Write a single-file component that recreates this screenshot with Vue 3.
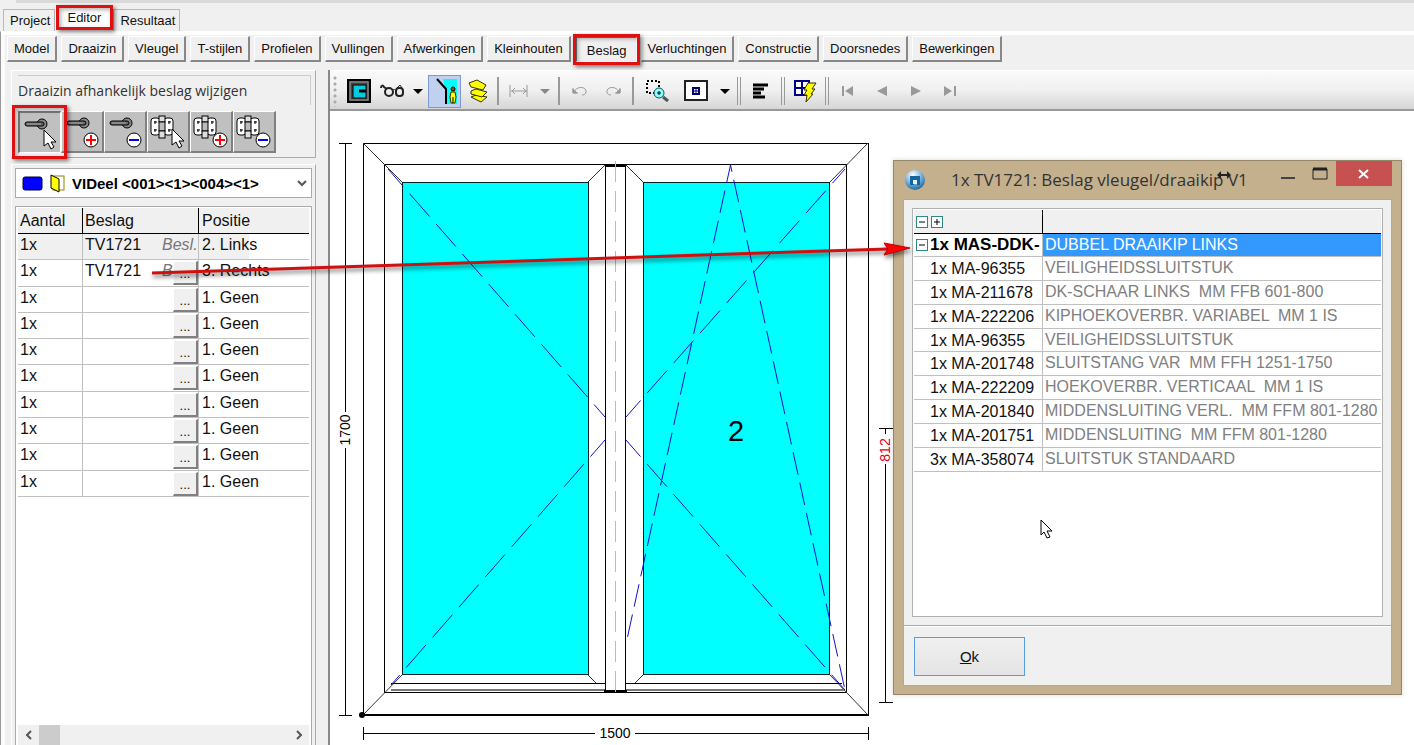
<template>
  <div class="app">
    <div class="top-strip"></div>
    <nav class="tabs">
      <button
        v-for="tab in tabs"
        :key="tab"
        type="button"
        class="tab"
        :class="{ active: tab === activeTab, marked: tab === activeTab }"
        @click="activeTab = tab"
      >{{ tab }}</button>
    </nav>

    <div class="page">
      <nav class="steps">
        <button
          v-for="step in steps"
          :key="step"
          type="button"
          class="step"
          :class="{ pressed: step === activeStep, marked: step === activeStep }"
          @click="activeStep = step"
        >{{ step }}</button>
      </nav>

      <div class="workspace">
        <aside class="sidebar">
          <section class="panel tools-panel">
            <h2 class="panel-title">Draaizin afhankelijk beslag wijzigen</h2>
            <div class="tools">
              <button
                v-for="(tool, i) in tools"
                :key="tool.label"
                type="button"
                class="tool"
                :class="{ pressed: i === activeTool, marked: i === activeTool }"
                :aria-label="tool.label"
                @click="activeTool = i"
              >
                <svg viewBox="0 0 42 42" width="42" height="42">
                  <g v-if="tool.kind === 'handle'" stroke="#000">
                    <ellipse cx="23" cy="12" rx="5" ry="5" fill="#888" />
                    <rect x="6" y="10" width="19" height="4" rx="2" fill="#666" />
                    <path d="M8 12h14" stroke="#aaa" />
                  </g>
                  <g v-else stroke="#000" fill="#fff">
                    <rect x="4" y="7" width="9" height="17" rx="3" />
                    <rect x="17" y="7" width="9" height="17" rx="3" />
                    <rect x="12" y="5" width="6" height="6" fill="#ddd" />
                    <rect x="12" y="11" width="6" height="9" fill="#bbb" />
                    <rect x="12" y="20" width="6" height="7" fill="#ddd" />
                    <path d="M8 10v3M8 18v3M22 10v3M22 18v3M7 11h3M7 19h3M21 11h3M21 19h3" />
                  </g>
                  <path
                    v-if="tool.badge === 'cursor'"
                    d="M25 18v16l4-3 3 6 3-2-3-5h5z"
                    fill="#fff"
                    stroke="#000"
                  />
                  <g v-else>
                    <circle cx="30" cy="29" r="7" fill="#fff" stroke="#000" />
                    <path v-if="tool.badge === 'plus'" d="M25 29h10M30 24v10" stroke="#f00" stroke-width="2" />
                    <path v-else d="M25 29h10" stroke="#00f" stroke-width="2" />
                  </g>
                </svg>
              </button>
            </div>
          </section>

          <section class="panel list-panel">
            <div class="combo">
              <svg class="combo-icons" viewBox="0 0 44 20" width="44" height="20">
                <rect x="1" y="4" width="19" height="13" rx="2" fill="#00f" stroke="#003" />
                <rect x="31" y="3" width="11" height="14" fill="#fff" stroke="#880" />
                <path d="M29 2l8 4v13l-8-4z" fill="#ff0" stroke="#000" />
              </svg>
              <select v-model="part" aria-label="Deel">
                <option>VIDeel &lt;001&gt;&lt;1&gt;&lt;004&gt;&lt;1&gt;</option>
              </select>
              <svg class="combo-arrow" viewBox="0 0 10 8" width="10" height="8">
                <path d="M1 2l4 4 4-4" fill="none" stroke="#555" stroke-width="2" />
              </svg>
            </div>

            <div class="list-box">
              <table class="fittings">
                <thead>
                  <tr>
                    <th class="col-count">Aantal</th>
                    <th class="col-fitting">Beslag</th>
                    <th>Positie</th>
                  </tr>
                </thead>
                <tbody>
                  <tr v-for="(row, i) in fittings" :key="i" :class="{ current: i === 0 }">
                    <td>1x</td>
                    <td>
                      <div class="fitting-cell">
                        <span class="code">{{ row.code }}</span>
                        <i>{{ row.note }}</i>
                        <button v-if="i > 0" type="button" class="more" aria-label="Beslag kiezen">...</button>
                      </div>
                    </td>
                    <td>{{ row.position }}</td>
                  </tr>
                </tbody>
              </table>
              <div class="scrollbar">
                <button type="button" aria-label="Naar links">
                  <svg viewBox="0 0 10 10" width="10" height="10"><path d="M7 1L3 5l4 4" /></svg>
                </button>
                <div class="thumb"></div>
                <button type="button" aria-label="Naar rechts">
                  <svg viewBox="0 0 10 10" width="10" height="10"><path d="M3 1l4 4-4 4" /></svg>
                </button>
              </div>
            </div>
          </section>
        </aside>

        <main class="editor">
          <div class="toolbar">
            <span class="grip"></span>
            <button type="button" class="tb" aria-label="Aanzicht">
              <svg viewBox="0 0 24 24" width="24" height="24">
                <rect x="1" y="1" width="22" height="22" fill="#444" stroke="#000" stroke-width="2" />
                <rect x="3" y="3" width="18" height="18" fill="none" stroke="#999" />
                <rect x="6" y="6" width="13" height="13" fill="#0cd" stroke="#000" />
                <path d="M12 12h7" stroke="#000" stroke-width="3" />
              </svg>
            </button>
            <button type="button" class="tb" aria-label="Weergave">
              <svg viewBox="0 0 26 16" width="26" height="16" fill="none" stroke="#222">
                <path d="M2 5c0-3 2-3 3-1l3 2" stroke-width="2" />
                <path d="M13 8c1-2 3-2 4 0M18 5l3-3 2 3" />
                <circle cx="10" cy="9" r="4" stroke-width="2" />
                <rect x="17" y="5" width="7" height="8" rx="3" stroke-width="2" />
              </svg>
            </button>
            <button type="button" class="caret" aria-label="Meer weergaven"><span></span></button>
            <button type="button" class="tb selected" aria-label="Buitenaanzicht">
              <svg viewBox="0 0 32 30" width="32" height="30">
                <path d="M14 3h14v25H16V14z" fill="#0ff" />
                <path d="M8 3l9 10v15" fill="none" stroke="#000" stroke-width="2" />
                <circle cx="24" cy="13" r="2" fill="#850" stroke="#000" />
                <path d="M22 16h4l1 5-1 6h-4l-1-6z" fill="#ff0" stroke="#330" />
                <path d="M24 21v6" stroke="#000" />
              </svg>
            </button>
            <button type="button" class="tb" aria-label="Lagen">
              <svg viewBox="0 0 22 24" width="22" height="24" fill="#ff0" stroke="#330">
                <path d="M4 18l5-2 11 2-6 5z" />
                <path d="M4 12l5-2 11 3-5 5-11-3z" />
                <path d="M2 4l8-3 9 5-3 5-12-3z" />
              </svg>
            </button>
            <span class="sep"></span>
            <button type="button" class="tb" aria-label="Maatlijn">
              <svg viewBox="0 0 20 12" width="20" height="12" fill="none" stroke="#999">
                <path d="M1 0v12M18 0v12M2 6h16M6 3L3 6l3 3M14 3l3 3-3 3" />
              </svg>
            </button>
            <button type="button" class="caret disabled" aria-label="Meer maatlijnen"><span></span></button>
            <span class="sep"></span>
            <button type="button" class="tb" aria-label="Ongedaan maken">
              <svg viewBox="0 0 18 12" width="18" height="12" fill="none" stroke="#999">
                <path d="M2 3v5h5M3 7c3-7 13-5 12 0 0 2-2 3-4 3" />
                <path d="M2 4v4h4z" fill="#999" />
              </svg>
            </button>
            <button type="button" class="tb" aria-label="Opnieuw">
              <svg viewBox="0 0 18 12" width="18" height="12" fill="none" stroke="#999">
                <path d="M16 3v5h-5M15 7C12 0 2 2 3 7c0 2 2 3 4 3" />
                <path d="M16 4v4h-4z" fill="#999" />
              </svg>
            </button>
            <span class="sep"></span>
            <button type="button" class="tb wide" aria-label="Zoom venster">
              <svg viewBox="0 0 24 24" width="24" height="24" fill="none">
                <path d="M2 2h12v12H2z" stroke="#000" stroke-width="2" stroke-dasharray="2 2" />
                <path d="M18 18l5 4" stroke="#555" stroke-width="3" />
                <circle cx="14" cy="14" r="5" fill="#8ff" stroke="#155" />
                <path d="M12 14h4M14 12v4" stroke="#000" />
              </svg>
            </button>
            <button type="button" class="tb wide" aria-label="Passend">
              <svg viewBox="0 0 24 22" width="24" height="22">
                <rect x="1" y="1" width="22" height="19" fill="#fff" stroke="#222" stroke-width="2" />
                <rect x="9" y="8" width="6" height="6" fill="#fff" stroke="#006" stroke-width="2" />
                <path d="M12 8v6M9 11h6" stroke="#006" />
              </svg>
            </button>
            <button type="button" class="caret" aria-label="Meer zoom"><span></span></button>
            <span class="sep double"></span>
            <button type="button" class="tb mid" aria-label="Uitlijnen">
              <svg viewBox="0 0 16 16" width="16" height="16" stroke="#000">
                <path d="M0 2h15M0 6h11M0 10h8M0 14h12" stroke-width="3" />
              </svg>
            </button>
            <span class="sep double"></span>
            <button type="button" class="tb mid" aria-label="Berekenen">
              <svg viewBox="0 0 24 24" width="24" height="24">
                <path d="M2 2h14v14H2zM9 2v14M2 9h14" fill="#fff" stroke="#008" stroke-width="2" />
                <path d="M15 4h8l-4 6h3l-4 5h2l-7 8 1-7h-3l3-5h-3z" fill="#ff0" stroke="#330" />
              </svg>
            </button>
            <span class="sep double"></span>
            <button
              v-for="nav in navButtons"
              :key="nav.label"
              type="button"
              class="tb nav"
              :aria-label="nav.label"
            >
              <svg viewBox="0 0 14 10" width="14" height="10"><path :d="nav.path" fill="#999" /></svg>
            </button>
          </div>

          <div class="canvas">
            <svg class="drawing" viewBox="330 111 1084 634">
              <!-- maatlijnen -->
              <g class="line">
                <path d="M345.5 143.5V412M345.5 448V715.5M339 143.5h13M339 715.5h13" />
                <path d="M363 733.5H595M635 733.5H868M363.5 727v13M868.5 727v13" />
                <path d="M879 428.5h14M885.5 428v6M885.5 464V702M879 702.5h14" />
              </g>
              <text class="dim" transform="translate(350 430) rotate(-90)">1700</text>
              <text class="dim" x="615" y="738">1500</text>
              <text class="dim red" transform="translate(890 450) rotate(-90)">812</text>

              <!-- kader -->
              <rect class="line" x="363.5" y="143.5" width="505" height="572" />
              <path class="line thick" d="M363 715H869" />
              <rect class="line" x="384.5" y="164.5" width="462" height="528" />
              <path class="thin" d="M363 143l39 39M868 143l-38 39M402 675l-39 40M830 675l38 40" />
              <path class="thin" d="M588 182l17-17M643 182l-17-17M588 675l8 8M643 675l-8 8" />
              <path class="line" d="M391 683.5H605M626 683.5H842M385 692.5H846" />
              <path class="bead" d="M391 690H605M626 690H844" />

              <!-- beglazing -->
              <rect class="glass" x="402.5" y="182.5" width="186" height="492" />
              <rect class="glass" x="643.5" y="182.5" width="186" height="492" />

              <!-- middenstijl -->
              <rect class="mullion" x="605.5" y="165.5" width="20" height="526" />
              <path class="line thick" d="M605 166H626M604 691H627" />
              <path class="axis" d="M615.5 161V693" />

              <!-- draairichting -->
              <g class="swing">
                <path d="M388 169L605 417" stroke-dashoffset="7" />
                <path d="M605 440L391 685" stroke-dashoffset="8" />
                <path d="M626 417L845 169" stroke-dashoffset="8" />
                <path d="M626 440L845 690" stroke-dashoffset="8" />
              </g>
              <g class="tilt">
                <path d="M730.5 165L626 644" stroke-dashoffset="5" />
                <path d="M730.5 165L845 690" stroke-dashoffset="16" />
              </g>
              <text class="field" x="736" y="441">2</text>
              <circle cx="362" cy="715" r="3" />
            </svg>
          </div>
        </main>
      </div>
    </div>

    <div class="dialog" role="dialog" aria-labelledby="dialog-title">
      <header class="title-bar">
        <svg class="logo" viewBox="0 0 20 20" width="20" height="20">
          <defs>
            <radialGradient id="ball" cx="40%" cy="25%" r="80%">
              <stop offset="0" stop-color="#fff" />
              <stop offset="0.5" stop-color="#7fb8e0" />
              <stop offset="1" stop-color="#1a5f96" />
            </radialGradient>
          </defs>
          <circle cx="10" cy="10" r="10" fill="url(#ball)" />
          <path d="M5 6h10v9h-3v-4H9v4H5z" fill="#17659f" />
          <path d="M8 10h4v4H8z" fill="#dff4ff" />
        </svg>
        <h1 id="dialog-title">1x TV1721: Beslag vleugel/draaikip V1</h1>
        <div class="window-buttons">
          <button type="button" aria-label="Minimaliseren">
            <svg viewBox="0 0 16 14" width="16" height="14"><path d="M1 11h14" stroke="#444" stroke-width="2" /></svg>
          </button>
          <button type="button" aria-label="Maximaliseren">
            <svg viewBox="0 0 16 14" width="16" height="14">
              <path d="M1 2h14v10H1z" fill="none" stroke="#222" />
              <path d="M1 2h14" stroke="#222" stroke-width="3" />
            </svg>
          </button>
          <button type="button" class="close" aria-label="Sluiten">
            <svg viewBox="0 0 12 10" width="12" height="10"><path d="M1 1l9 8M10 1L1 9" stroke="#fff" stroke-width="2" /></svg>
          </button>
        </div>
        <svg class="resize-cursor" viewBox="0 0 14 10" width="14" height="10">
          <path d="M0 5l4-4v3h6V1l4 4-4 4V6H4v3z" fill="#222" />
        </svg>
      </header>

      <div class="dialog-body">
        <div class="parts-box">
          <table class="parts">
            <thead>
              <tr>
                <th class="col-part">
                  <div class="tree-buttons">
                    <button type="button" class="tree" aria-label="Alles inklappen">
                      <svg viewBox="0 0 10 10" width="12" height="12"><path d="M2 5h6" /></svg>
                    </button>
                    <button type="button" class="tree" aria-label="Alles uitklappen">
                      <svg viewBox="0 0 10 10" width="12" height="12"><path d="M2 5h6M5 2v6" /></svg>
                    </button>
                  </div>
                </th>
                <th aria-label="Omschrijving"></th>
              </tr>
            </thead>
            <tbody>
              <tr class="group">
                <td>
                  <div class="group-cell">
                    <button type="button" class="tree" aria-label="Inklappen">
                      <svg viewBox="0 0 10 10" width="12" height="12"><path d="M2 5h6" /></svg>
                    </button>
                    <span>1x MAS-DDK-</span>
                  </div>
                </td>
                <td>DUBBEL DRAAIKIP LINKS</td>
              </tr>
              <tr v-for="(item, i) in parts" :key="i">
                <td>{{ item[0] }}</td>
                <td>{{ item[1] }}</td>
              </tr>
            </tbody>
          </table>
          <svg class="pointer" viewBox="0 0 14 20" width="14" height="20">
            <path d="M1 1v15l3-3 3 6 3-1-3-6h5z" fill="#fff" stroke="#000" />
          </svg>
        </div>
        <footer class="dialog-footer">
          <button type="button" class="ok"><u>O</u>k</button>
        </footer>
      </div>
    </div>

    <svg class="arrow" viewBox="0 0 770 50" width="770" height="50">
      <path d="M2 33L738 9" stroke="#d01010" stroke-width="3" />
      <path d="M734 3l26 5-26 7 4-6z" fill="#f00" stroke="#b00" />
    </svg>
  </div>
</template>

<script setup>
  import { ref } from 'vue'

  const tabs = ['Project', 'Editor', 'Resultaat']
  const activeTab = ref('Editor')

  const steps = [
    'Model',
    'Draaizin',
    'Vleugel',
    'T-stijlen',
    'Profielen',
    'Vullingen',
    'Afwerkingen',
    'Kleinhouten',
    'Beslag',
    'Verluchtingen',
    'Constructie',
    'Doorsnedes',
    'Bewerkingen',
  ]
  const activeStep = ref('Beslag')

  const tools = [
    { kind: 'handle', badge: 'cursor', label: 'Beslag kiezen' },
    { kind: 'handle', badge: 'plus', label: 'Beslag toevoegen' },
    { kind: 'handle', badge: 'minus', label: 'Beslag verwijderen' },
    { kind: 'hinge', badge: 'cursor', label: 'Scharnier kiezen' },
    { kind: 'hinge', badge: 'plus', label: 'Scharnier toevoegen' },
    { kind: 'hinge', badge: 'minus', label: 'Scharnier verwijderen' },
  ]
  const activeTool = ref(0)

  const part = ref('VIDeel <001><1><004><1>')

  // de eerste twee regels zijn ingevuld, de rest is nog leeg
  const fittings = [
    { code: 'TV1721', note: 'Besl.', position: '2. Links' },
    { code: 'TV1721', note: 'B', position: '3. Rechts' },
    ...Array.from({ length: 8 }, () => ({ code: '', note: '', position: '1. Geen' })),
  ]

  const navButtons = [
    { label: 'Eerste', path: 'M1 0h2v10H1zM12 0v10L4 5z' },
    { label: 'Vorige', path: 'M12 0v10L2 5z' },
    { label: 'Volgende', path: 'M2 0v10l10-5z' },
    { label: 'Laatste', path: 'M1 0v10l8-5zM11 0h2v10h-2z' },
  ]

  const parts = [
    ['1x MA-96355', 'VEILIGHEIDSSLUITSTUK'],
    ['1x MA-211678', 'DK-SCHAAR LINKS  MM FFB 601-800'],
    ['1x MA-222206', 'KIPHOEKOVERBR. VARIABEL  MM 1 IS'],
    ['1x MA-96355', 'VEILIGHEIDSSLUITSTUK'],
    ['1x MA-201748', 'SLUITSTANG VAR  MM FFH 1251-1750'],
    ['1x MA-222209', 'HOEKOVERBR. VERTICAAL  MM 1 IS'],
    ['1x MA-201840', 'MIDDENSLUITING VERL.  MM FFM 801-1280'],
    ['1x MA-201751', 'MIDDENSLUITING  MM FFM 801-1280'],
    ['3x MA-358074', 'SLUITSTUK STANDAARD'],
  ]
</script>

<style>
  body {
    margin: 0;
    background: #f0f0f0;
  }
</style>

<style scoped>
  * {
    box-sizing: border-box;
  }

  button {
    margin: 0;
    padding: 0;
    border: 0;
    background: none;
    color: inherit;
    font: inherit;
  }

  svg {
    display: block;
    flex: none;
  }

  .app {
    position: relative;
    display: flex;
    flex-direction: column;
    height: 100vh;
    overflow: hidden;
    background: #f0f0f0;
    color: #111;
    font-family: 'Liberation Sans', Arial, sans-serif;
    font-size: 13px;
  }

  .top-strip {
    height: 3px;
    margin-left: 16px;
    background: #d9d9d9;
  }

  .tabs {
    display: flex;
    align-items: flex-end;
    height: 28px;
    padding-left: 3px;
  }

  .tab {
    height: 22px;
    padding: 0 4px 0 6px;
    border: 1px solid #b8b8b8;
    border-bottom: 0;
  }

  .tab.active {
    position: relative;
    height: 25px;
    padding: 0 12px 2px;
    border: 0;
    background: #fff;
  }

  /* rode markering rond het actieve onderdeel */
  .marked::after {
    content: '';
    position: absolute;
    z-index: 2;
    inset: -4px;
    border: 3px solid #e01010;
    box-shadow: 2px 2px 4px rgba(0, 0, 0, 0.5), inset 2px 2px 4px rgba(0, 0, 0, 0.3);
    pointer-events: none;
  }

  .tab.marked::after {
    inset: -1px 0 1px 1px;
  }

  .page {
    flex: 1;
    display: flex;
    flex-direction: column;
    min-height: 0;
    border-top: 1px solid #fff;
    border-left: 1px solid #999;
    box-shadow: inset 4px 0 #fbfbfb;
  }

  .steps {
    display: flex;
    gap: 4px;
    height: 38px;
    padding: 4px 0 8px 6px;
    box-shadow: inset 0 3px #fff;
  }

  .step {
    position: relative;
    padding: 0 6px;
    border: solid;
    border-width: 1px 2px 2px 1px;
    border-color: #fff #888 #888 #fff;
    background: #f0f0f0;
    white-space: nowrap;
  }

  .step.pressed {
    padding: 1px 9px 0 10px;
    border-color: #777 #fff #fff #777;
    border-width: 2px 1px 1px 2px;
  }

  .workspace {
    flex: 1;
    display: flex;
    min-height: 0;
  }

  .sidebar {
    flex: none;
    display: flex;
    flex-direction: column;
    gap: 6px;
    width: 329px;
    padding: 0 12px 0 10px;
    border-right: 2px solid #888;
  }

  .panel {
    border: 1px solid #aaa;
    border-color: #fff #aaa #aaa #fff;
  }

  .tools-panel {
    height: 88px;
    padding: 4px 4px 0 6px;
  }

  .panel-title {
    height: 30px;
    margin: 0;
    border-top: 1px solid #ccc;
    border-right: 1px solid #ccc;
    font: 14px/30px 'Open Sans', 'Noto Sans', sans-serif;
    color: #333;
  }

  .tools {
    display: flex;
    padding-top: 6px;
  }

  .tool {
    position: relative;
    width: 43px;
    height: 42px;
    border: solid;
    border-width: 1px 2px 2px 1px;
    border-color: #fff #808080 #808080 #fff;
    background: #c0c0c0;
    overflow: visible;
  }

  .tool svg {
    margin: -1px;
  }

  .tool.pressed {
    border-width: 2px 1px 1px 2px;
    border-color: #777 #fff #fff #777;
  }

  .tool.marked::after {
    inset: -8px -7px -7px -8px;
  }

  .list-panel {
    flex: 1;
    display: flex;
    flex-direction: column;
    gap: 8px;
    min-height: 0;
    padding: 3px 3px 0;
    border-bottom: 0;
  }

  .combo {
    display: flex;
    align-items: center;
    height: 30px;
    padding: 0 4px 0 6px;
    border: 1px solid #aaa;
    background: #fff;
  }

  .combo select {
    flex: 1;
    min-width: 0;
    height: 26px;
    padding: 0 0 0 6px;
    border: 0;
    appearance: none;
    background: none;
    color: #000;
    font: bold 15px 'Liberation Sans', Arial, sans-serif;
  }

  .list-box {
    flex: 1;
    display: flex;
    flex-direction: column;
    min-height: 0;
    padding: 1px 2px 0;
    border: 1px solid #aaa;
    border-bottom: 0;
    background: #fff;
  }

  table {
    width: 100%;
    border-spacing: 0;
    table-layout: fixed;
    font-size: 16px;
    line-height: 20px;
  }

  th,
  td {
    padding: 0 0 0 2px;
    text-align: left;
    font-weight: normal;
    white-space: pre;
    overflow: hidden;
  }

  th {
    background: #f0f0f0;
    border-right: 1px solid #000;
    border-bottom: 1px solid #000;
  }

  td {
    border-right: 1px solid #c0c0c0;
    border-bottom: 1px solid #c0c0c0;
  }

  th:last-child,
  td:last-child {
    border-right: 0;
  }

  .fittings {
    height: 289px;
  }

  .fittings th {
    height: 26px;
  }

  .fittings td {
    height: 26px;
    padding-top: 1px;
    vertical-align: top;
  }

  .fittings td:last-child,
  .fittings th:last-child {
    padding-left: 3px;
  }

  .col-count {
    width: 65px;
  }

  .col-fitting {
    width: 116px;
  }

  .current td {
    background: #f0f0f0;
  }

  .current td:last-child {
    background: linear-gradient(to right, #f0f0f0 50px, #fff 50px);
  }

  .fitting-cell {
    display: flex;
    height: 24px;
  }

  .fitting-cell .code {
    flex: none;
    width: 77px;
  }

  .fitting-cell i {
    flex: 1;
    min-width: 0;
    overflow: hidden;
    color: #777;
  }

  .more {
    align-self: flex-end;
    width: 25px;
    height: 24px;
    padding-top: 3px;
    border: solid;
    border-width: 1px 2px 2px 1px;
    border-color: #fff #808080 #808080 #fff;
    background: #f0f0f0;
    font-size: 13px;
    line-height: 18px;
  }

  .scrollbar {
    display: flex;
    height: 20px;
    margin-top: auto;
    background: #f0f0f0;
  }

  .scrollbar button {
    display: grid;
    place-items: center;
    width: 21px;
  }

  .scrollbar button:last-child {
    margin-left: auto;
  }

  .scrollbar path {
    fill: none;
    stroke: #555;
    stroke-width: 2;
  }

  .thumb {
    width: 21px;
    background: #ccc;
  }

  .editor {
    flex: 1;
    display: flex;
    flex-direction: column;
    min-width: 0;
  }

  .toolbar {
    display: flex;
    align-items: center;
    height: 41px;
    padding-top: 2px;
    border-top: 1px solid #fff;
    border-bottom: 2px solid #999;
    background: linear-gradient(#fafafa, #f0f0f0 50%, #d6d6d6);
  }

  .grip {
    width: 12px;
    height: 32px;
    background: radial-gradient(circle at 5px 3px, #aaa 1px, transparent 2px) 0 0 / 12px 6px;
  }

  .tb {
    display: grid;
    place-items: center;
    flex: none;
    width: 33px;
    height: 33px;
  }

  .tb.wide {
    width: 39px;
  }

  .tb.mid {
    width: 36px;
  }

  .tb.nav {
    width: 34px;
  }

  .tb.selected {
    border: 1px solid #7b9bd0;
    background: #c0d0ee;
  }

  .caret {
    display: grid;
    place-items: center;
    flex: none;
    width: 20px;
    height: 33px;
  }

  .caret span {
    border: 5px solid transparent;
    border-top-color: #000;
    border-bottom: 0;
  }

  .caret.disabled span {
    border-top-color: #888;
  }

  .sep {
    width: 2px;
    height: 28px;
    margin: 0 3px;
    background: #999;
  }

  .sep.double {
    width: 4px;
    margin: 0 2px;
    border: solid #999;
    border-width: 0 1px;
    background: none;
  }

  .canvas {
    flex: 1;
    min-height: 0;
    overflow: hidden;
    background: #fff;
  }

  .drawing {
    width: 100%;
    font-family: 'Liberation Sans', Arial, sans-serif;
  }

  .line {
    fill: none;
    stroke: #000;
  }

  .thick {
    stroke-width: 2;
  }

  .thin {
    fill: none;
    stroke: #333;
  }

  .bead {
    stroke: #777;
    stroke-width: 2;
  }

  .glass {
    fill: #0ff;
    stroke: #022;
  }

  .mullion {
    fill: #fff;
    stroke: #000;
  }

  .axis {
    stroke: #bbb;
    stroke-dasharray: 21 9;
  }

  .swing {
    fill: none;
    stroke: #11c;
    stroke-dasharray: 30 10;
  }

  .tilt {
    fill: none;
    stroke: #11c;
    stroke-dasharray: 23 8;
  }

  .dim {
    font-size: 14px;
    text-anchor: middle;
  }

  .red {
    fill: #e00020;
  }

  .field {
    font-size: 29px;
    text-anchor: middle;
  }

  .dialog {
    position: absolute;
    top: 160px;
    left: 893px;
    display: flex;
    flex-direction: column;
    width: 509px;
    height: 535px;
    padding: 0 9px 8px;
    border: 1px solid #94866a;
    background: #c4b08d;
    box-shadow: 0 0 5px rgba(0, 0, 0, 0.15);
  }

  .title-bar {
    position: relative;
    display: flex;
    align-items: center;
    height: 38px;
  }

  .logo {
    margin-left: 2px;
  }

  .title-bar h1 {
    margin: 0 0 0 26px;
    font: 17px/38px 'Open Sans', 'Noto Sans', sans-serif;
    color: #333;
    white-space: nowrap;
  }

  .window-buttons {
    display: flex;
    align-self: flex-start;
    margin-left: auto;
  }

  .window-buttons button {
    display: grid;
    place-items: center;
    width: 32px;
    height: 25px;
  }

  .window-buttons .close {
    width: 56px;
    background: #c75050;
  }

  .resize-cursor {
    position: absolute;
    top: 9px;
    left: 314px;
  }

  .dialog-body {
    flex: 1;
    display: flex;
    flex-direction: column;
    min-height: 0;
    border: 1px solid #aaa;
    background: #f0f0f0;
  }

  .parts-box {
    position: relative;
    flex: 1;
    margin: 8px;
    padding: 1px;
    border: 1px solid #b0b0b0;
    background: #fff;
  }

  .parts {
    height: 262px;
  }

  .parts th {
    height: 24px;
  }

  .parts td {
    padding-top: 1px;
    vertical-align: top;
    color: #808080;
  }

  .parts td:first-child {
    padding: 2px 0 0 16px;
    color: #111;
  }

  .parts .col-part {
    width: 129px;
  }

  .tree-buttons {
    display: flex;
    gap: 3px;
  }

  .tree svg {
    border: 1px solid #2a8a80;
    background: #fff;
  }

  .tree path {
    stroke: #000;
  }

  .parts .group td:first-child {
    padding: 0 0 0 2px;
    font-size: 17px;
    font-weight: bold;
    color: #000;
  }

  .group-cell {
    display: flex;
    align-items: center;
    gap: 2px;
    padding-top: 1px;
    overflow: hidden;
  }

  .parts .group td:last-child {
    background: #3399ff;
    color: #fff;
  }

  .pointer {
    position: absolute;
    top: 310px;
    left: 127px;
  }

  .dialog-footer {
    height: 60px;
    padding: 11px 10px;
    border-top: 1px solid #aaa;
    box-shadow: inset 0 1px #fff;
  }

  .ok {
    width: 111px;
    height: 39px;
    border: 1px solid #569de5;
    background: linear-gradient(#f0f0f0, #e4e4e4);
    font-size: 15px;
  }

  .arrow {
    position: absolute;
    z-index: 3;
    top: 240px;
    left: 150px;
    filter: drop-shadow(1px 3px 2px rgba(0, 0, 0, 0.5));
    pointer-events: none;
  }
</style>
